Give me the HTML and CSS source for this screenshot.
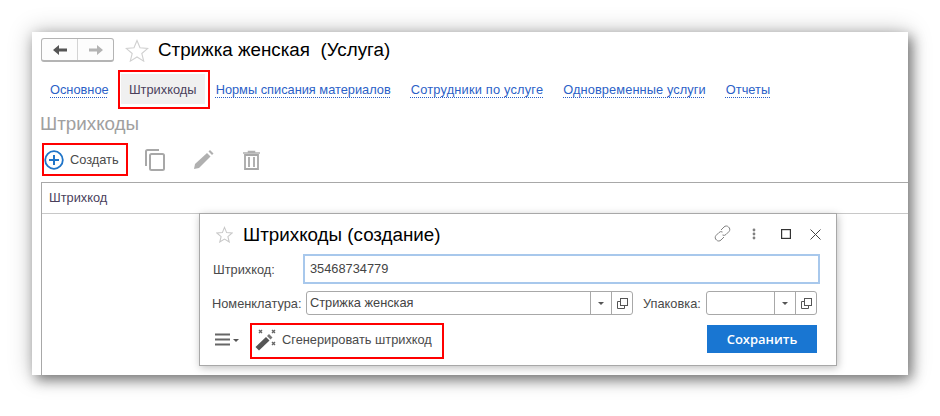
FILE: index.html
```html
<!DOCTYPE html>
<html lang="ru">
<head>
<meta charset="utf-8">
<title>Стрижка женская (Услуга)</title>
<link rel="stylesheet" href="styles.css">
</head>
<body>
<div class="window">
  <header class="head">
    <div class="nav">
      <button class="nav-btn"><svg width="16" height="12" viewBox="0 0 16 12"><path d="M1 6l6-5v3.500h8v3H7V11z" fill="#555"/></svg></button>
      <button class="nav-btn"><svg width="16" height="12" viewBox="0 0 16 12"><path d="M15 6L9 1v3.500H1v3h8V11z" fill="#b4b4b4"/></svg></button>
    </div>
    <svg class="star-big" width="24" height="23" viewBox="0 0 24 23"><path d="M12 1.500l3 7.300 7.800.6-6 5.100 1.900 7.600L12 18l-6.700 4.100 1.900-7.600-6-5.100 7.800-.6z" fill="#fff" stroke="#d0d0d0" stroke-width="1.100"/></svg>
    <h1 class="title">Стрижка женская&nbsp; (Услуга)</h1>
  </header>
  <nav class="tabs">
    <a class="tab">Основное</a>
    <div class="tab-active"><span>Штрихкоды</span></div>
    <a class="tab tab-after">Нормы списания материалов</a>
    <a class="tab tab-staff">Сотрудники по услуге</a>
    <a class="tab tab-sim">Одновременные услуги</a>
    <a class="tab">Отчеты</a>
  </nav>
  <h2 class="section">Штрихкоды</h2>
  <div class="toolbar">
    <div class="create">
      <svg width="20" height="20" viewBox="0 0 20 20"><circle cx="10" cy="10" r="8.800" fill="none" stroke="#1f74c8" stroke-width="1.800"/><path d="M10 5v10M5 10h10" stroke="#1f74c8" stroke-width="2"/></svg>
      <span>Создать</span>
    </div>
    <svg class="tool-copy" width="20" height="22" viewBox="0 0 20 22"><path d="M14 1H2.500A1.500 1.500 0 0 0 1 2.500V17" fill="none" stroke="#a8a8a8" stroke-width="2"/><rect x="5" y="5" width="14" height="16" rx="1.500" fill="none" stroke="#a8a8a8" stroke-width="2"/></svg>
    <svg class="tool-pencil" width="21" height="21" viewBox="0 0 21 21"><path d="M1 20l1-5L14 4l3.500 3.500L6 19z" fill="#b0b0b0"/><path d="M15.500 2.500L17 1l3.500 3.500L19 6z" fill="#b0b0b0"/></svg>
    <svg class="tool-trash" width="17" height="20" viewBox="0 0 17 20"><path d="M0 3h17M5.500 3V1.500h6V3" fill="none" stroke="#b0b0b0" stroke-width="1.500"/><path d="M2 5h13v14H2z" fill="none" stroke="#a8a8a8" stroke-width="1.800"/><path d="M6 7v10M11 7v10" stroke="#a8a8a8" stroke-width="1.800"/></svg>
  </div>
  <div class="table">
    <div class="table-head">Штрихкод</div>
  </div>

  <section class="dialog">
    <div class="dlg-head">
      <svg class="star-small" width="17" height="17" viewBox="0 0 24 23"><path d="M12 1.500l3 7.300 7.800.6-6 5.100 1.900 7.600L12 18l-6.700 4.100 1.900-7.600-6-5.100 7.800-.6z" fill="#fff" stroke="#c8c8c8" stroke-width="1.500"/></svg>
      <h3 class="dlg-title">Штрихкоды (создание)</h3>
      <svg class="ico-link" width="17" height="17" viewBox="0 0 17 17"><g fill="none" stroke="#808080" stroke-width="1"><path d="M7 5l3-3a3 3 0 0 1 4.500 0 3 3 0 0 1 .5 4.500l-3 3a3 3 0 0 1-3.500.5"/><path d="M10 12l-3 3a3 3 0 0 1-4.500 0A3 3 0 0 1 2 10.500l3-3a3 3 0 0 1 3.500-.5"/></g></svg>
      <svg class="ico-dots" width="4" height="12" viewBox="0 0 4 12"><g fill="#808080"><circle cx="2" cy="2" r="1.400"/><circle cx="2" cy="6" r="1.400"/><circle cx="2" cy="10" r="1.400"/></g></svg>
      <svg class="ico-max" width="10" height="10" viewBox="0 0 10 10"><rect x=".6" y=".6" width="8.800" height="8.800" fill="none" stroke="#333" stroke-width="1.200"/></svg>
      <svg class="ico-close" width="11" height="11" viewBox="0 0 11 11"><path d="M.5.500l10 10M10.500.500l-10 10" stroke="#444" stroke-width="1"/></svg>
    </div>
    <div class="row-code">
      <label class="lbl lbl-code">Штрихкод:</label>
      <div class="input-focus">35468734779</div>
    </div>
    <div class="row-item">
      <label class="lbl lbl-item">Номенклатура:</label>
      <div class="combo combo-wide">
        <span class="combo-val">Стрижка женская</span>
        <span class="combo-btn"><i class="caret"></i></span>
        <span class="combo-btn"><svg width="11" height="11" viewBox="0 0 11 11"><path d="M3.500 3.500h-3v7h7v-3" fill="none" stroke="#555"/><rect x="3.500" y=".5" width="7" height="7" fill="none" stroke="#555"/></svg></span>
      </div>
      <label class="lbl lbl-pack">Упаковка:</label>
      <div class="combo combo-small">
        <span class="combo-val"></span>
        <span class="combo-btn"><i class="caret"></i></span>
        <span class="combo-btn"><svg width="11" height="11" viewBox="0 0 11 11"><path d="M3.500 3.500h-3v7h7v-3" fill="none" stroke="#555"/><rect x="3.500" y=".5" width="7" height="7" fill="none" stroke="#555"/></svg></span>
      </div>
    </div>
    <div class="row-actions">
      <svg class="ico-menu" width="15" height="13" viewBox="0 0 15 13"><path d="M0 1.500h15M0 6.500h15M0 11.500h15" stroke="#666" stroke-width="2"/></svg>
      <i class="caret caret-menu"></i>
      <div class="generate">
        <svg width="22" height="22" viewBox="0 0 22 22"><path d="M.5 18L11 8l3.500 3.500L4 21.500z" fill="#555"/><path d="M12 7l2-2 3.500 3.500-2 2z" fill="#777"/><g stroke="#666" stroke-width="1.400"><path d="M4 1l3 3M7 1L4 4M17 1l3 3M20 1l-3 3M17 13l3 3M20 13l-3 3"/></g></svg>
        <span>Сгенерировать штрихкод</span>
      </div>
      <button class="save">Сохранить</button>
    </div>
  </section>
</div>
</body>
</html>
```
FILE: styles.css
```css
* { box-sizing: border-box; }
html, body { margin: 0; padding: 0; background: #fff; }
body {
  width: 940px;
  height: 416px;
  overflow: hidden;
  padding: 32px;
  font-family: "Liberation Sans", Arial, sans-serif;
  font-size: 12.8px;
  color: #4a4a4a;
}
.window {
  position: relative;
  width: 876px;
  height: 343px;
  padding-top: 6px;
  background: #fff;
  box-shadow: 4px 5px 12px rgba(0, 0, 0, .45), 0 0 22px rgba(0, 0, 0, .25);
}
.head {
  display: flex;
  align-items: center;
  height: 24px;
  padding-left: 9px;
}
.nav {
  display: flex;
  width: 73px;
  height: 24px;
  border: 1px solid #b4b4b4;
  border-bottom-width: 2px;
  border-radius: 3px;
  background: #fdfdfd;
}
.nav-btn {
  flex: 1;
  display: flex;
  align-items: center;
  justify-content: center;
  padding: 0;
  border: 0;
  background: none;
}
.nav-btn + .nav-btn { border-left: 1px solid #d4d4d4; }
.star-big { margin-left: 11px; flex: none; }
.title {
  margin: 0 0 0 9px;
  font-size: 18.8px;
  font-weight: 400;
  color: #000;
}
.tabs {
  display: flex;
  align-items: center;
  height: 39px;
  margin-top: 8px;
  padding-left: 8px;
}
.tab {
  margin: 0 10px;
  color: #2b5fc7;
  line-height: 15px;
  white-space: nowrap;
  text-decoration: underline dotted 1px #2b5fc7;
  text-underline-offset: 3px;
}
.tab-after { margin-left: 6px; }
.tab-staff { letter-spacing: .2px; }
.tab-sim { letter-spacing: .1px; }
.tab-active {
  width: 92px;
  height: 39px;
  margin-left: -1px;
  padding: 2px 3px 3px 1px;
  border: 2px solid #f00;
  color: #4a3f5c;
}
.tab-active span {
  display: flex;
  align-items: center;
  justify-content: center;
  height: 100%;
  background: #f0f0f0;
}
.section {
  margin: 4px 0 0 8px;
  height: 21px;
  font-size: 18.8px;
  line-height: 21px;
  font-weight: 400;
  color: #a0a0a0;
}
.toolbar {
  display: flex;
  align-items: center;
  height: 33px;
  margin-top: 9px;
  padding-left: 10px;
}
.create {
  display: flex;
  align-items: center;
  gap: 6px;
  width: 86px;
  height: 33px;
  border: 2px solid #f00;
}
.tool-copy { margin-left: 17px; }
.tool-pencil { margin-left: 28px; }
.tool-trash { margin-left: 29px; }
.table {
  height: 193px;
  margin: 6px 0 0 9px;
  border-top: 1px solid #a8a8a8;
  border-left: 1px solid #a8a8a8;
}
.table-head {
  height: 31px;
  padding-left: 7px;
  line-height: 29px;
  color: #4a3f5c;
  border-bottom: 1px solid #c8c8c8;
}
.dialog {
  position: absolute;
  left: 167px;
  top: 181px;
  width: 638px;
  height: 153px;
  border: 1px solid #a8a8a8;
  background: #fff;
  box-shadow: 1px 2px 8px rgba(0, 0, 0, .25);
}
.dlg-head {
  display: flex;
  align-items: center;
  height: 40px;
  padding-left: 16px;
}
.star-small { flex: none; }
.dlg-title {
  flex: 1;
  margin: 0 0 0 10px;
  padding-top: 2px;
  font-size: 18.8px;
  font-weight: 400;
  color: #000;
}
.ico-link { margin-right: 21px; margin-bottom: 2px; }
.ico-dots { margin-right: 25px; }
.ico-max { margin-right: 19px; }
.ico-close { margin-right: 15px; }
.row-code {
  display: flex;
  align-items: center;
  height: 30px;
}
.lbl { flex: none; white-space: nowrap; }
.lbl-code { width: 103px; padding-left: 13px; }
.input-focus {
  width: 517px;
  height: 30px;
  padding-left: 5px;
  border: 2px solid #a8c8ec;
  line-height: 26px;
  color: #444;
}
.row-item {
  display: flex;
  align-items: center;
  height: 24px;
  margin-top: 7px;
  padding-left: 12px;
}
.lbl-item { width: 88px; }
.combo {
  display: flex;
  flex: none;
  height: 24px;
  border: 1px solid #a8a8a8;
  border-radius: 3px;
}
.combo-wide { width: 327px; margin-left: 6px; }
.combo-small { width: 111px; margin-left: 6px; }
.combo-val {
  flex: 1;
  padding-left: 3px;
  line-height: 22px;
  color: #444;
}
.combo-btn {
  display: flex;
  align-items: center;
  justify-content: center;
  width: 21px;
  border-left: 1px solid #a8a8a8;
}
.caret {
  display: block;
  width: 0;
  height: 0;
  border: 3px solid transparent;
  border-top: 3px solid #555;
  border-bottom: 0;
}
.lbl-pack { width: 57px; margin-left: 10px; }
.row-actions {
  display: flex;
  align-items: center;
  height: 36px;
  margin-top: 8px;
  padding-left: 15px;
}
.ico-menu { position: relative; top: -2px; }
.caret-menu { margin: -2px 0 0 3px; }
.generate {
  display: flex;
  align-items: center;
  gap: 5px;
  width: 194px;
  height: 36px;
  margin-left: 11px;
  padding: 0 0 3px 3px;
  border: 2px solid #f00;
}
.save {
  align-self: flex-start;
  width: 110px;
  height: 28px;
  margin: 2px 0 0 263px;
  border: 0;
  background: #1976d2;
  color: #fff;
  font: 600 13px "Open Sans", "Liberation Sans", sans-serif;
}
```
